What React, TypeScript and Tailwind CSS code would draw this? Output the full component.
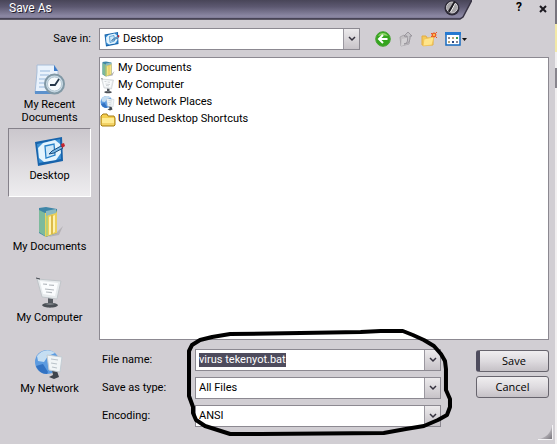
import type { ReactNode } from "react";
import { clsx } from "clsx";

type IconProps = { className?: string };

function DesktopIcon({ className }: IconProps) {
	return (
		<svg viewBox="0 0 32 32" className={className} aria-hidden="true">
			<path d="M1 7 28 2 29 26 4 31z" fill="#1763ab" />
			<path d="M3 9 26 4 27 24 5 28z" fill="#3d92d6" />
			<path d="M9 8 21 5 26 9 27 18 22 25 10 27 5 23 4 13z" fill="#e4f4fd" />
			<path d="M11 11 20 9 21 20 12 23z" fill="#cfe8f8" stroke="#2781c8" strokeWidth="1.3" />
			<path d="m15 19 3-3 9-5 2 2-9 5z" fill="#78b7e4" stroke="#174d80" strokeWidth="1" />
			<path d="m27 9 3-1 1 3-3 2z" fill="#c5242e" />
		</svg>
	);
}

function RecentIcon({ className }: IconProps) {
	return (
		<svg viewBox="0 0 32 32" className={className} aria-hidden="true">
			<path d="M3 1h17l4 6v22H1L3 8z" fill="#e9f2fc" stroke="#a8bdd7" />
			<path d="M20 1v6h4z" fill="#3f7cc8" />
			<path d="M6 7h10M6 11h9M5 15h7M5 19h6M5 23h7" stroke="#b3cbe6" strokeWidth="1.3" />
			<path d="M1 27h17v3H1z" fill="#5c91cc" />
			<circle cx="20.5" cy="20" r="9.5" fill="#c9dbe6" stroke="#8198a5" strokeWidth="2" />
			<circle cx="20.5" cy="20" r="7" fill="#f7fbfd" stroke="#b5c7d2" />
			<path d="m25 15-4 6h-5" fill="none" stroke="#26384a" strokeWidth="1.8" />
		</svg>
	);
}

function DocumentsIcon({ className }: IconProps) {
	return (
		<svg viewBox="0 0 32 32" className={className} aria-hidden="true">
			<path d="m22 27 7-7-4 9-11 2z" fill="#b5b2b6" />
			<path d="m5 2 7-1 11 2v24l-11 4-7-4z" fill="#3f86a8" />
			<path d="m5 4 6 3v23l-6-4z" fill="#7cba9c" />
			<path d="m11 7 11-3 1 3v20l-12 4z" fill="#ecd05a" />
			<path d="m12 9 2-1v21l-2 1z" fill="#b5cf78" />
			<path d="m15 11 2-1v18l-2 1zM19 10l2-1v17l-2 1z" fill="#fff3b0" />
			<path d="m12 5 10-2v4l-10 3z" fill="#8cbac2" />
			<path d="M18 9v19" stroke="#cda437" />
		</svg>
	);
}

function ComputerIcon({ className }: IconProps) {
	return (
		<svg viewBox="0 0 32 32" className={className} aria-hidden="true">
			<path d="m14 20 5 1v6h-5z" fill="#555a60" />
			<path d="M8 28c2-3 14-3 16 0 0 3-14 4-16 0z" fill="#4b5056" />
			<path d="M11 27c3-1 7-1 10 0-3 1-7 1-10 0z" fill="#8a9095" />
			<path d="m3 2 24 2-4 18-15-2z" fill="#e6eaec" stroke="#c0c5c9" />
			<path d="m6 4 18 2-3 13-12-2z" fill="#fafcfd" />
			<path d="m9 7 4 .3M15 8l5 .4M11 12l9 1M12 15l6 .7" stroke="#b3b8bd" strokeWidth="1.2" />
			<path d="m2 1 4 1" stroke="#444950" />
		</svg>
	);
}

function NetworkIcon({ className }: IconProps) {
	return (
		<svg viewBox="0 0 32 32" className={className} aria-hidden="true">
			<circle cx="13" cy="14" r="12" fill="#5c9be0" />
			<path d="M3 8C7 2 15 0 21 5l-7 3-4 6-6-1z" fill="#c5def2" />
			<path d="m2 18 7-2 5 8-1 2c-5 0-9-3-11-8z" fill="#3272c2" />
			<path d="m18 22 5 1 2 6-5 2-5-2 4-2z" fill="#3e454d" />
			<path d="m13 7 15 2-2 15-11-2z" fill="#f1f5f7" stroke="#c3cdd4" />
			<path d="m17 11 7 1M17 15l6 1M18 19l5 1" stroke="#b9c2c9" strokeWidth="1.2" />
		</svg>
	);
}

function FolderIcon({ className }: IconProps) {
	return (
		<svg viewBox="0 0 16 16" className={className} aria-hidden="true">
			<path d="M1 13V4l2-2h4l1 2h6l1 2v7l-1 1H2z" fill="#f4cf50" stroke="#a57d16" />
			<path d="M2 6h12v7H2z" fill="#ffec93" />
			<path d="M2 12h12" stroke="#e7b93b" />
		</svg>
	);
}

function BackIcon() {
	return (
		<svg viewBox="0 0 16 16" className="size-4" aria-hidden="true">
			<circle cx="8" cy="8" r="7.3" fill="#35a51e" stroke="#4aa236" />
			<path d="M3 5c2-4 8-4 10 0-3-1-7-1-10 0" fill="#91d66c" />
			<path d="M12.5 8H4M8 4 4 8l4 4" fill="none" stroke="#fff" strokeWidth="2" />
		</svg>
	);
}

function UpIcon() {
	return (
		<svg viewBox="0 0 16 16" className="size-4" aria-hidden="true">
			<path d="m2 6 4-2 1 2 5-1-1 8-8 2z" fill="#c3c0c3" stroke="#a9a6ab" />
			<path d="m4 8 8-2-2 7-7 2z" fill="#d3d1d4" />
			<path d="M6 13c4-1 4-4 3-8H6l4-4 4 4h-2c0 5-1 8-6 8z" fill="#c6c4c8" stroke="#8f8c93" strokeWidth=".8" />
		</svg>
	);
}

function NewFolderIcon() {
	return (
		<svg viewBox="0 0 16 16" className="size-4" aria-hidden="true">
			<path d="M1 5h4l1 2h6v7H1z" fill="#f3c95a" stroke="#e3ac40" />
			<path d="m3 8 10-2-2 8-9 1z" fill="#ffe58a" stroke="#efc254" strokeWidth=".8" />
			<circle cx="13" cy="4" r="1.8" fill="#ffc04c" stroke="#ea5a22" strokeWidth="1.3" />
			<path d="m10 2 1 1M16 1l-1 1M10 6l1-1M16 7l-1-1" stroke="#ea5a22" />
		</svg>
	);
}

function ViewIcon() {
	return (
		<svg viewBox="0 0 24 16" className="h-4 w-6" aria-hidden="true">
			<path d="M2 2h14v12H2z" fill="#fff" stroke="#176bc0" strokeWidth="1.5" />
			<path d="M1 1h16v3H1z" fill="#2579d1" />
			<path d="M4 6h2v2H4zM12 10h2v2h-2z" fill="#8b8792" />
			<path d="M8 6h2v2H8zM4 10h2v2H4z" fill="#b8a578" />
			<path d="M12 6h2v2h-2z" fill="#3b9b51" />
			<path d="M8 10h2v2H8z" fill="#294883" />
			<path d="M18 7h5l-2.500 3z" fill="#111" />
		</svg>
	);
}

function Chevron() {
	return (
		<span className="pointer-events-none absolute inset-y-0 right-0 flex w-4 items-center justify-center border-l border-[#9b98a0] bg-linear-to-b from-[#eceaec] to-[#c7c3c8]">
			<svg viewBox="0 0 8 6" className="h-1.5 w-2" aria-hidden="true">
				<path d="m1 1 3 3 3-3" fill="none" stroke="#35323e" strokeWidth="1.5" />
			</svg>
		</span>
	);
}

type FieldProps = { id: string; value: string; icon?: ReactNode; className?: string };

function SelectField({ id, value, icon, className }: FieldProps) {
	return (
		<div className={clsx("relative flex h-[22px] min-w-0 items-center border border-[#8c8991] bg-white", className)}>
			{icon}
			<select id={id} defaultValue={value} className="h-full w-full appearance-none bg-transparent pr-5 pl-[3px] outline-none">
				<option>{value}</option>
			</select>
			<Chevron />
		</div>
	);
}

const places = [
	{ label: "My Recent Documents", Icon: RecentIcon },
	{ label: "Desktop", Icon: DesktopIcon, active: true },
	{ label: "My Documents", Icon: DocumentsIcon },
	{ label: "My Computer", Icon: ComputerIcon },
	{ label: "My Network", Icon: NetworkIcon },
];

const files = [
	{ name: "My Documents", Icon: DocumentsIcon },
	{ name: "My Computer", Icon: ComputerIcon },
	{ name: "My Network Places", Icon: NetworkIcon },
	{ name: "Unused Desktop Shortcuts", Icon: FolderIcon },
];

const actionClass =
	"h-[22px] rounded-[3px] border border-[#67646d] bg-linear-to-b from-[#f0eef0] via-[#dedbdf] to-[#c5c1c6] font-['Open_Sans',sans-serif]";

function TitleBar() {
	return (
		<header className="flex h-5 items-start">
			<div className="relative h-5 flex-1">
				<svg viewBox="0 0 472 20" preserveAspectRatio="none" className="absolute inset-0 size-full" aria-hidden="true">
					<defs>
						<linearGradient id="title" x1="0" y1="0" x2="0" y2="1">
							<stop offset="0" stopColor="#484558" />
							<stop offset=".35" stopColor="#5c5870" />
							<stop offset=".85" stopColor="#8c88a4" />
							<stop offset="1" stopColor="#77738c" />
						</linearGradient>
					</defs>
					<path d="M0 0h472l-9 17-3 2H0z" fill="url(#title)" />
					<path d="M0 19h460l3-2 9-17" fill="none" stroke="#373343" strokeWidth="1.500" />
				</svg>
				<div className="relative flex h-4 items-center justify-between pr-3 pl-[9px]">
					<h1 className="text-[12px] text-white [text-shadow:1px_1px_0_#25222f]">Save As</h1>
					<svg viewBox="0 0 16 16" className="size-4" aria-hidden="true">
						<circle cx="8" cy="8" r="7.500" fill="#2e2b38" />
						<circle cx="8" cy="7.500" r="5.500" fill="#a5a3a6" stroke="#cfcdd0" />
						<path d="m5 12 6-10" stroke="#1e1c22" strokeWidth="2.500" />
						<path d="m6.500 12 5-9" stroke="#fff" strokeWidth="1" />
					</svg>
				</div>
			</div>
			<div className="flex h-[18px] w-[83px] items-center justify-end gap-3 pr-1.5">
				<button type="button" aria-label="Help" className="w-3 pb-1 text-[12px] font-bold">?</button>
				<button type="button" aria-label="Close" className="flex w-3 justify-center">
					<svg viewBox="0 0 8 8" className="size-2" aria-hidden="true">
						<path d="m1 1 6 6M7 1 1 7" stroke="#1c1a20" strokeWidth="2" />
					</svg>
				</button>
			</div>
		</header>
	);
}

function Sidebar() {
	return (
		<nav aria-label="Places" className="flex w-[83px] shrink-0 flex-col gap-0.5">
			{places.map(({ label, Icon, active }) => (
				<button
					key={label}
					type="button"
					className={clsx(
						"flex h-[69px] flex-col items-center gap-0.5 border px-1.5 pt-1.5 leading-[13px]",
						active
							? "border-t-[#85818a] border-r-white border-b-white border-l-[#85818a] bg-linear-to-b from-[#cbc7cd] to-[#eeedef]"
							: "border-transparent",
					)}
				>
					<Icon className="size-8 shrink-0" />
					<span className={label === "My Recent Documents" ? "" : "whitespace-nowrap"}>{label}</span>
				</button>
			))}
		</nav>
	);
}

// Freehand marker stroke around the three fields
function MarkerLoop() {
	return (
		<svg
			viewBox="187 330 265 108"
			preserveAspectRatio="none"
			className="pointer-events-none absolute -top-5 -left-2 h-[108px] w-[calc(100%+20px)]"
			aria-hidden="true"
		>
			<path
				d="M380 332 360 333 300 334 230 335 212 338 200 341 192 346 189 352 189 397 193 408 193 414 196 421 205 427 230 435 260 435 383 434 405 430 423 427 437 421 446 416 449 408 449 400 445 391 445 370 444 362 440 355 433 347 423 341 412 336 402 332z"
				fill="none"
				stroke="#000"
				strokeWidth="4"
				strokeLinejoin="round"
			/>
		</svg>
	);
}

function ResizeGrip() {
	return (
		<svg viewBox="0 0 16 16" className="pointer-events-none absolute right-0.5 bottom-1 size-4" aria-hidden="true">
			<defs>
				<linearGradient id="grip" x1="0" y1="0" x2="1" y2="1">
					<stop offset=".45" stopColor="#d1ced3" />
					<stop offset="1" stopColor="#77747b" />
				</linearGradient>
			</defs>
			<path d="M15 1v14H1C9 14 14 9 15 1z" fill="url(#grip)" />
			<path d="M15.500 1v14.500H1" fill="none" stroke="#f3f2f4" />
		</svg>
	);
}

export default function App() {
	return (
		<div className="flex min-h-screen bg-[#d1ced3] font-[Roboto,'Liberation_Sans',sans-serif] text-[11px] text-black">
			<div className="relative flex min-w-0 flex-1 flex-col">
				<TitleBar />
				<div className="mt-2 flex h-[22px] items-center pl-2">
					<label htmlFor="folder" className="w-[91px] pr-2 text-right">Save in:</label>
					<div className="flex min-w-0 flex-1 items-center">
						<SelectField id="folder" value="Desktop" className="flex-1" icon={<DesktopIcon className="ml-1 size-4 shrink-0" />} />
						<div className="flex w-[195px] items-center gap-[7px] pl-[15px]">
							<button type="button" aria-label="Back"><BackIcon /></button>
							<button type="button" aria-label="Up one level"><UpIcon /></button>
							<button type="button" aria-label="New folder"><NewFolderIcon /></button>
							<button type="button" aria-label="View"><ViewIcon /></button>
						</div>
					</div>
				</div>
				<div className="mt-[7px] flex flex-1 gap-2 pr-1.5 pl-2">
					<Sidebar />
					<main className="flex min-w-0 flex-1 flex-col">
						<ul className="min-h-[283px] flex-1 border border-[#8c8991] bg-white pt-0.5">
							{files.map(({ name, Icon }) => (
								<li key={name} className="flex h-[17px] items-center gap-0.5">
									<Icon className="size-4" />
									{name}
								</li>
							))}
						</ul>
						<form className="flex h-[104px] gap-[35px] pt-[9px]">
							<div className="flex min-w-0 flex-1">
								<div className="flex w-24 flex-col gap-1.5 pl-[3px]">
									<label htmlFor="name" className="leading-[22px]">File name:</label>
									<label htmlFor="type" className="leading-[22px]">Save as type:</label>
									<label htmlFor="encoding" className="leading-[22px]">Encoding:</label>
								</div>
								<div className="relative flex min-w-0 flex-1 flex-col gap-1.5">
									<div className="relative flex h-[22px] items-center border border-[#8c8991] bg-white pl-[3px]">
										<input
											id="name"
											defaultValue="virus tekenyot.bat"
											className="field-sizing-content h-3.5 bg-[#4e4c5d] text-white outline-none"
										/>
										<Chevron />
									</div>
									<SelectField id="type" value="All Files" />
									<SelectField id="encoding" value="ANSI" />
									<MarkerLoop />
								</div>
							</div>
							<div className="flex w-[73px] flex-col gap-1 pt-px">
								<button type="submit" className={clsx(actionClass, "border-l-4 border-l-[#4e4c5d]")}>Save</button>
								<button type="button" className={actionClass}>Cancel</button>
							</div>
						</form>
					</main>
				</div>
				<ResizeGrip />
			</div>
			<div className="flex w-0.5 flex-col bg-[#f1eff0]">
				<div className="h-6 bg-[#77747d]" />
				<div className="h-7 bg-[#f3e9a8]" />
				<div className="mt-4 h-5 bg-[#88858d]" />
			</div>
		</div>
	);
}
